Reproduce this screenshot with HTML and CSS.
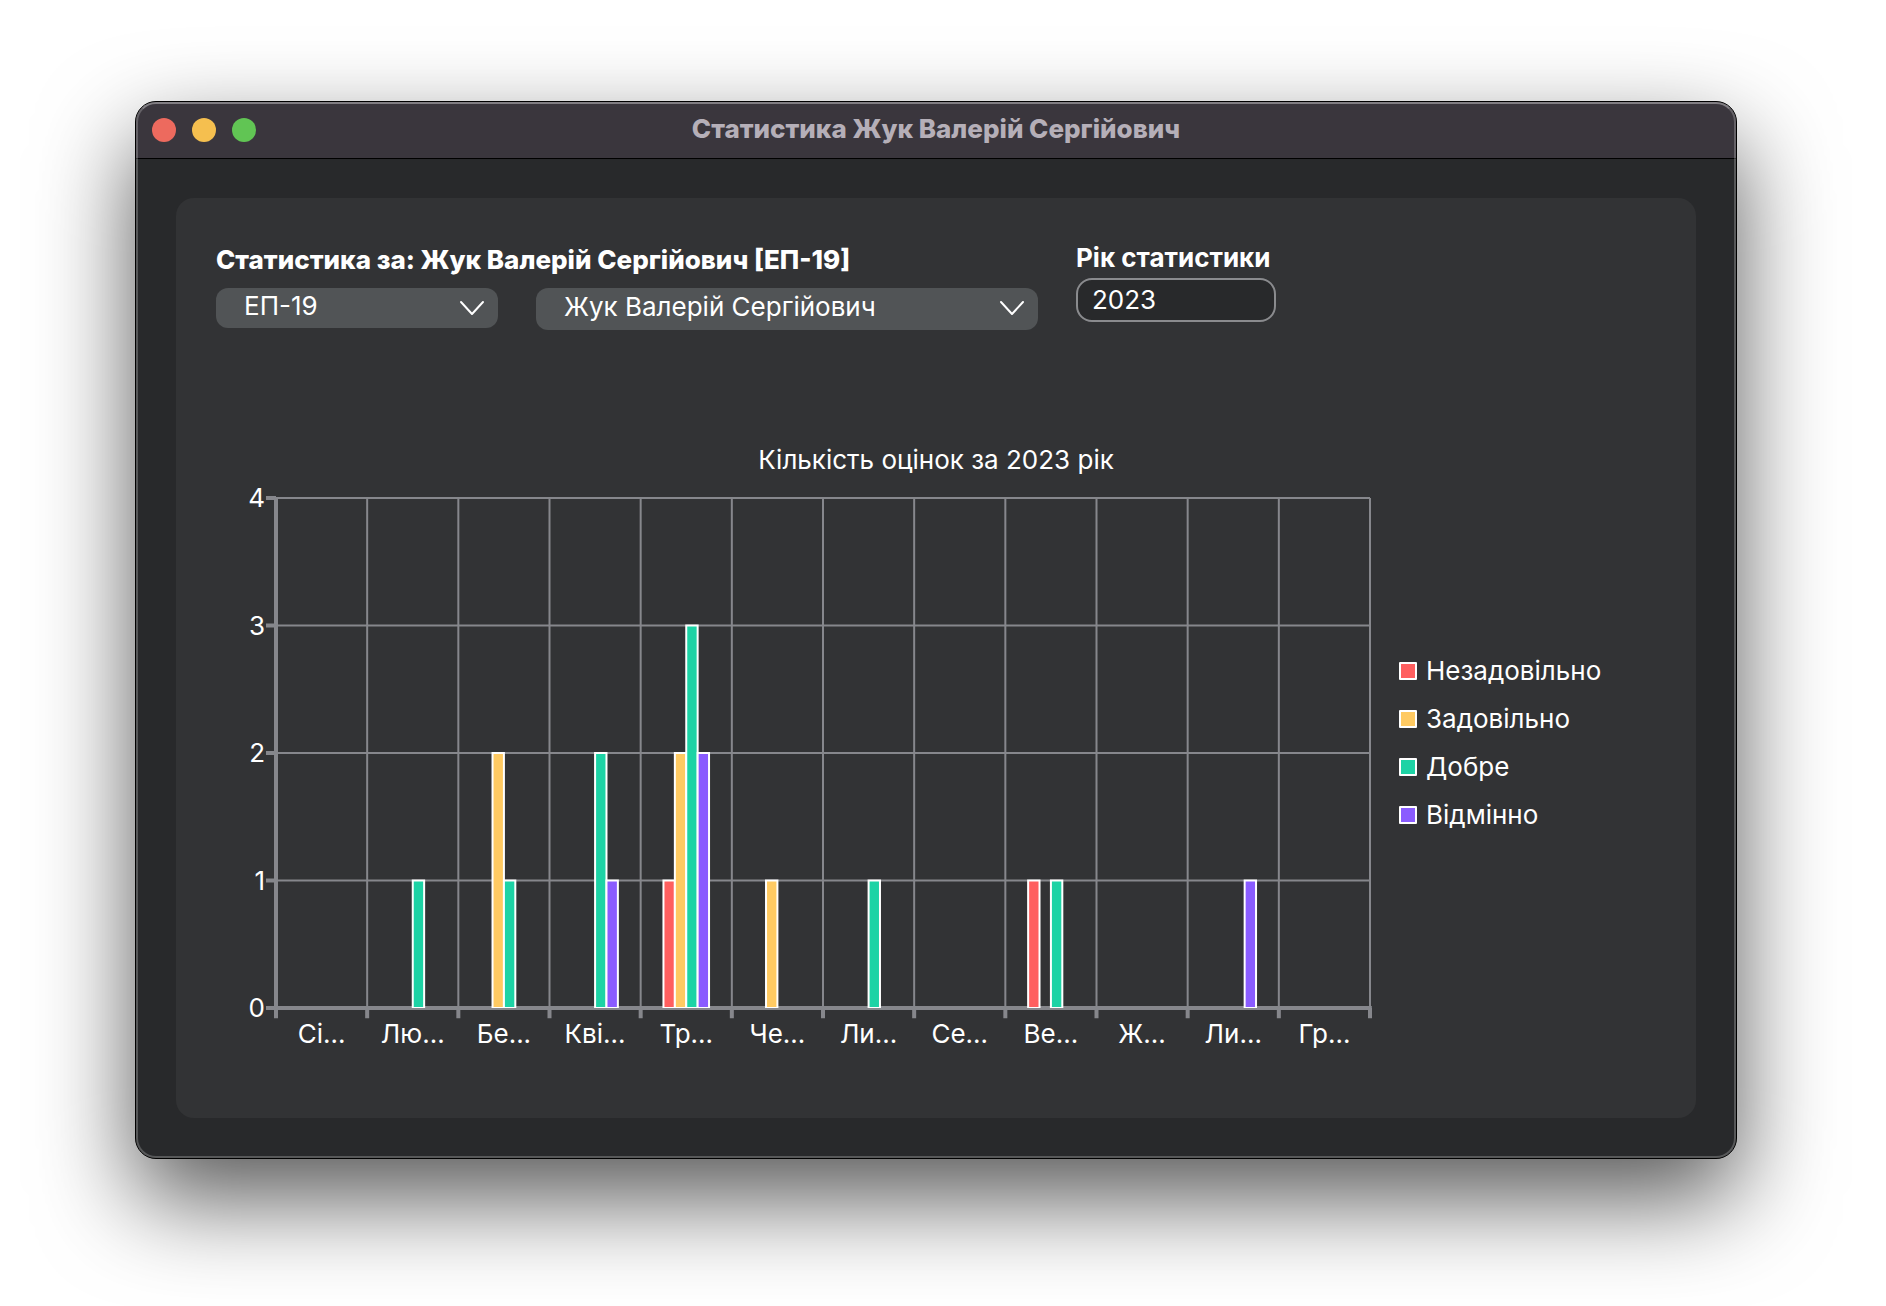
FILE: index.html
```html
<!DOCTYPE html>
<html lang="uk">
<head>
<meta charset="utf-8">
<meta name="viewport" content="width=device-width, initial-scale=1">
<title>Статистика Жук Валерій Сергійович</title>
<link rel="stylesheet" href="styles.css">
</head>
<body>
<main class="window">
  <header class="titlebar">
    <div class="lights">
      <button class="light light-close" type="button" aria-label="Закрити"></button>
      <button class="light light-minimize" type="button" aria-label="Згорнути"></button>
      <button class="light light-zoom" type="button" aria-label="Розгорнути"></button>
    </div>
    <h1 class="window-title">Статистика Жук Валерій Сергійович</h1>
  </header>
  <div class="content">
    <section class="card">
      <form class="filters">
        <div class="field">
          <label class="field-label" for="group">Статистика за: Жук Валерій Сергійович [ЕП-19]</label>
          <div class="selects">
            <div class="select-box select-group">
              <select class="select" id="group"><option>ЕП-19</option></select>
              <svg class="chevron" viewBox="0 0 26 16" aria-hidden="true"><path d="M2 2 13 14 24 2"/></svg>
            </div>
            <div class="select-box select-student">
              <select class="select" aria-label="Студент"><option>Жук Валерій Сергійович</option></select>
              <svg class="chevron" viewBox="0 0 26 16" aria-hidden="true"><path d="M2 2 13 14 24 2"/></svg>
            </div>
          </div>
        </div>
        <div class="field">
          <label class="year-label" for="year">Рік статистики</label>
          <input class="year" id="year" type="text" value="2023">
        </div>
      </form>

      <h2 class="chart-title">Кількість оцінок за 2023 рік</h2>
      <div class="chart">
        <div class="y-axis"><span>4</span><span>3</span><span>2</span><span>1</span><span>0</span></div>
        <div class="plot">
          <svg class="plot-svg" viewBox="0 0 1200 400" preserveAspectRatio="none" aria-hidden="true">
            <clipPath id="above-axis"><rect x="0" y="-10" width="1200" height="410"/></clipPath>
            <path class="grid" d="M0 0H1200M0 100H1200M0 200H1200M0 300H1200M100 0V400M200 0V400M300 0V400M400 0V400M500 0V400M600 0V400M700 0V400M800 0V400M900 0V400M1000 0V400M1100 0V400M1200 0V400"/>
            <path class="axis" d="M0 0V400M-11 0H0M-11 100H0M-11 200H0M-11 300H0M-11 400H1202M0 400V408M100 400V408M200 400V408M300 400V408M400 400V408M500 400V408M600 400V408M700 400V408M800 400V408M900 400V408M1000 400V408M1100 400V408M1200 400V408"/>
            <g class="bars" clip-path="url(#above-axis)">
              <rect class="bad" x="425" y="300" width="12.5" height="100"/>
              <rect class="bad" x="825" y="300" width="12.5" height="100"/>
              <rect class="fair" x="237.5" y="200" width="12.5" height="200"/>
              <rect class="fair" x="437.5" y="200" width="12.5" height="200"/>
              <rect class="fair" x="537.5" y="300" width="12.5" height="100"/>
              <rect class="good" x="150" y="300" width="12.5" height="100"/>
              <rect class="good" x="250" y="300" width="12.5" height="100"/>
              <rect class="good" x="350" y="200" width="12.5" height="200"/>
              <rect class="good" x="450" y="100" width="12.5" height="300"/>
              <rect class="good" x="650" y="300" width="12.5" height="100"/>
              <rect class="good" x="850" y="300" width="12.5" height="100"/>
              <rect class="great" x="362.5" y="300" width="12.5" height="100"/>
              <rect class="great" x="462.5" y="200" width="12.5" height="200"/>
              <rect class="great" x="1062.5" y="300" width="12.5" height="100"/>
            </g>
          </svg>
        </div>
        <ul class="legend">
          <li><i class="swatch swatch-bad"></i>Незадовільно</li>
          <li><i class="swatch swatch-fair"></i>Задовільно</li>
          <li><i class="swatch swatch-good"></i>Добре</li>
          <li><i class="swatch swatch-great"></i>Відмінно</li>
        </ul>
        <div class="x-axis">
          <span>Сі...</span><span>Лю...</span><span>Бе...</span><span>Кві...</span><span>Тр...</span><span>Че...</span><span>Ли...</span><span>Се...</span><span>Ве...</span><span>Ж...</span><span>Ли...</span><span>Гр...</span>
        </div>
      </div>
    </section>
  </div>
</main>
</body>
</html>
```
FILE: styles.css
```css
*,
*::before,
*::after {
  box-sizing: border-box;
}

body {
  margin: 0;
  min-height: 100vh;
  padding: 101px 149px 147px 135px;
  display: flex;
  background: #fff;
  color: #fff;
  font: 400 26px/32px Inter, "Liberation Sans", sans-serif;
}

.window {
  position: relative;
  flex: 1;
  min-width: 0;
  display: flex;
  flex-direction: column;
  border: 1px solid #000;
  border-radius: 21px;
  background: #28292b;
  box-shadow: 0 40px 96px rgba(0, 0, 0, .66);
}

/* light rim along the inside of the window frame */
.window::after {
  content: "";
  position: absolute;
  inset: 0;
  border: 2px solid rgba(255, 255, 255, .22);
  border-top-color: rgba(255, 255, 255, .36);
  border-radius: 20px;
  pointer-events: none;
}

.titlebar {
  display: grid;
  grid-template-columns: 1fr auto 1fr;
  align-items: center;
  height: 57px;
  padding: 0 16px;
  border-bottom: 1px solid #000;
  border-radius: 20px 20px 0 0;
  background: #3a363d;
}

.lights {
  display: flex;
  gap: 16px;
}

.light {
  width: 24px;
  height: 24px;
  padding: 0;
  border: 0;
  border-radius: 50%;
}

.light-close { background: #ed6a5e; }
.light-minimize { background: #f5bf4f; }
.light-zoom { background: #61c554; }

.window-title {
  margin: 0;
  padding-bottom: 2px;
  color: #b5afb8;
  font-size: 26px;
  font-weight: 800;
}

.content {
  flex: 1;
  display: flex;
  padding: 39px 40px 40px;
}

.card {
  flex: 1;
  min-width: 0;
  display: flex;
  flex-direction: column;
  padding: 40px 40px 68px;
  border-radius: 18px;
  background: #323335;
}

.filters {
  display: flex;
  gap: 38px;
  margin-bottom: 114px;
}

.field {
  display: flex;
  flex-direction: column;
}

.field-label {
  margin-bottom: 6px;
  font-weight: 800;
  line-height: 44px;
}

.year-label {
  font-weight: 700;
  line-height: 40px;
}

.selects {
  display: flex;
  align-items: flex-start;
  gap: 38px;
}

.select-box {
  position: relative;
}

.select-group { width: 282px; }
.select-student { width: 502px; }

.select {
  display: block;
  width: 100%;
  height: 40px;
  padding: 0 48px 4px 28px;
  border: 0;
  border-radius: 12px;
  appearance: none;
  background: #515456;
  color: inherit;
  font: inherit;
}

.select-student .select {
  height: 42px;
}

.chevron {
  position: absolute;
  top: 12px;
  right: 13px;
  width: 26px;
  height: 16px;
  fill: none;
  stroke: #fff;
  stroke-width: 2;
  stroke-linecap: round;
  stroke-linejoin: round;
  pointer-events: none;
}

.year {
  width: 200px;
  height: 44px;
  padding: 0 14px 2px;
  border: 2px solid #8a8b8e;
  border-radius: 16px;
  background: #28292b;
  color: inherit;
  font: inherit;
}

.chart-title {
  margin: 0 0 22px;
  font-size: 26px;
  font-weight: 400;
  text-align: center;
}

.chart {
  flex: 1;
  display: grid;
  grid-template-columns: 60px minmax(0, 1fr) 286px;
  grid-template-rows: minmax(400px, 1fr) auto;
  row-gap: 10px;
}

.y-axis {
  display: flex;
  flex-direction: column;
  justify-content: space-between;
  margin: -16px 0;
  padding-right: 11px;
  text-align: right;
}

.plot {
  display: flex;
  min-height: 0;
}

.plot-svg {
  width: 100%;
  height: 100%;
  overflow: visible;
}

.grid,
.axis,
.bars rect {
  vector-effect: non-scaling-stroke;
}

.grid {
  fill: none;
  stroke: #86878c;
  stroke-width: 2;
}

.axis {
  fill: none;
  stroke: #86878c;
  stroke-width: 4;
}

.bars rect {
  stroke: #fff;
  stroke-width: 2;
}

.bad { fill: #ff5f5f; }
.fair { fill: #ffca62; }
.good { fill: #1dd3a5; }
.great { fill: #8a5cff; }

.legend {
  display: flex;
  flex-direction: column;
  align-self: center;
  gap: 16px;
  margin: 0 0 20px;
  padding: 0 0 0 29px;
  list-style: none;
}

.legend li {
  display: flex;
  align-items: center;
  gap: 9px;
}

.swatch {
  width: 18px;
  height: 18px;
  border: 2px solid #fff;
  border-radius: 1px;
}

.swatch-bad { background: #ff5f5f; }
.swatch-fair { background: #ffca62; }
.swatch-good { background: #1dd3a5; }
.swatch-great { background: #8a5cff; }

.x-axis {
  grid-column: 2;
  display: grid;
  grid-template-columns: repeat(12, minmax(0, 1fr));
  text-align: center;
}
```
